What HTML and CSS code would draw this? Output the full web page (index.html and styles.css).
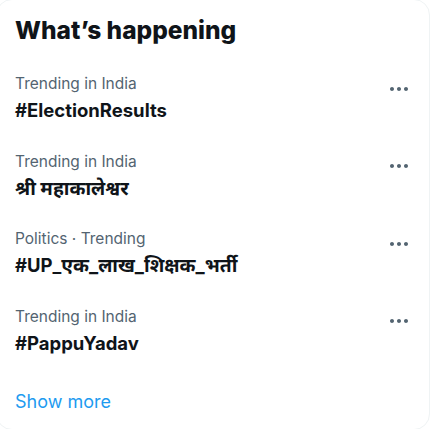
FILE: index.html
```html
<!DOCTYPE html>
<html lang="en">
<head>
<meta charset="utf-8">
<title>What's happening</title>
<link rel="stylesheet" href="styles.css">
</head>
<body>
<section class="card">
  <h2 class="title">What’s happening</h2>
  <div class="trend">
    <div class="info">
      <div class="meta">Trending in India</div>
      <div class="name">#ElectionResults</div>
    </div>
    <svg class="more" viewBox="0 0 24 24" aria-hidden="true"><path d="M3 12c0-1.1.9-2 2-2s2 .9 2 2-.9 2-2 2-2-.9-2-2zm9 2c1.1 0 2-.9 2-2s-.9-2-2-2-2 .9-2 2 .9 2 2 2zm7 0c1.1 0 2-.9 2-2s-.9-2-2-2-2 .9-2 2 .9 2 2 2z"/></svg>
  </div>
  <div class="trend">
    <div class="info">
      <div class="meta">Trending in India</div>
      <div class="name" lang="hi"><span class="deva">श्री महाकालेश्वर</span></div>
    </div>
    <svg class="more" viewBox="0 0 24 24" aria-hidden="true"><path d="M3 12c0-1.1.9-2 2-2s2 .9 2 2-.9 2-2 2-2-.9-2-2zm9 2c1.1 0 2-.9 2-2s-.9-2-2-2-2 .9-2 2 .9 2 2 2zm7 0c1.1 0 2-.9 2-2s-.9-2-2-2-2 .9-2 2 .9 2 2 2z"/></svg>
  </div>
  <div class="trend">
    <div class="info">
      <div class="meta">Politics · Trending</div>
      <div class="name" lang="hi">#UP_<span class="deva">एक_लाख_शिक्षक_भर्ती</span></div>
    </div>
    <svg class="more" viewBox="0 0 24 24" aria-hidden="true"><path d="M3 12c0-1.1.9-2 2-2s2 .9 2 2-.9 2-2 2-2-.9-2-2zm9 2c1.1 0 2-.9 2-2s-.9-2-2-2-2 .9-2 2 .9 2 2 2zm7 0c1.1 0 2-.9 2-2s-.9-2-2-2-2 .9-2 2 .9 2 2 2z"/></svg>
  </div>
  <div class="trend">
    <div class="info">
      <div class="meta">Trending in India</div>
      <div class="name">#PappuYadav</div>
    </div>
    <svg class="more" viewBox="0 0 24 24" aria-hidden="true"><path d="M3 12c0-1.1.9-2 2-2s2 .9 2 2-.9 2-2 2-2-.9-2-2zm9 2c1.1 0 2-.9 2-2s-.9-2-2-2-2 .9-2 2 .9 2 2 2zm7 0c1.1 0 2-.9 2-2s-.9-2-2-2-2 .9-2 2 .9 2 2 2z"/></svg>
  </div>
  <a class="show-more" href="#">Show more</a>
</section>
</body>
</html>
```

FILE: styles.css
```css
html, body {
  margin: 0;
  padding: 0;
  background: #ffffff;
  overflow: hidden;
}

body {
  font-family: Inter, "Noto Sans Devanagari", "Lohit Devanagari", "Noto Sans", sans-serif;
  color: #0f1419;
}

.card {
  box-sizing: border-box;
  width: 434px;
  margin: -1px 0 0 -4px;
  border: 1px solid #eff3f4;
  border-radius: 16px;
  display: flex;
  flex-direction: column;
  padding-bottom: 15px;
}

.title {
  margin: 0;
  padding: 15.75px 18px 14.9px 18px;
  font-size: 24.5px;
  line-height: 29px;
  font-weight: 800;
  color: #0f1419;
}

.trend {
  display: flex;
  justify-content: space-between;
  align-items: flex-start;
  padding: 14.75px 18px 14.75px 18px;
  height: 48px;
}

.info {
  display: flex;
  flex-direction: column;
  gap: 4px;
}

.meta {
  font-size: 15.5px;
  line-height: 20px;
  color: #536471;
}

.name {
  font-size: 18.5px;
  line-height: 24px;
  height: 24px;
  font-weight: 700;
  color: #0f1419;
  white-space: nowrap;
}

.deva {
  font-size: 1.04em;
  line-height: 24px;
}

.more {
  width: 24px;
  height: 24px;
  margin-top: 2.3px;
  fill: #536471;
  flex-shrink: 0;
}

.show-more {
  padding: 20.8px 18px 0 18px;
  font-size: 18px;
  line-height: 24px;
  color: #1d9bf0;
  text-decoration: none;
}
```
